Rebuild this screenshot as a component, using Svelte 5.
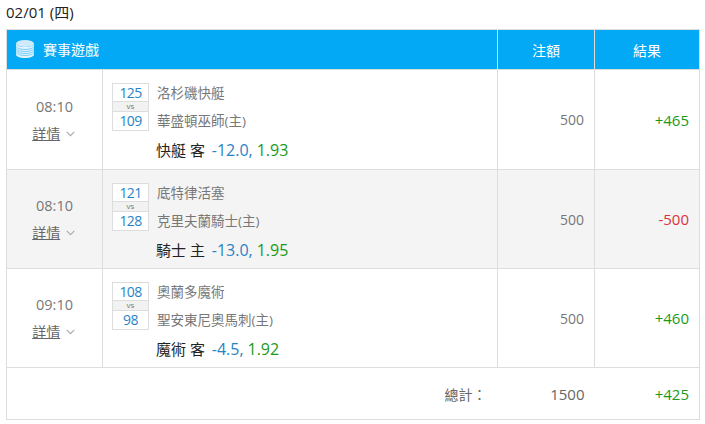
<script>
  const games = [
    { time: '08:10', s1: 125, s2: 109, away: '洛杉磯快艇', home: '華盛頓巫師(主)', pick: '快艇 客', line: '-12.0,', odds: '1.93', bet: 500, result: '+465', win: true, h: 100 },
    { time: '08:10', s1: 121, s2: 128, away: '底特律活塞', home: '克里夫蘭騎士(主)', pick: '騎士 主', line: '-13.0,', odds: '1.95', bet: 500, result: '-500', win: false, shade: true, h: 99 },
    { time: '09:10', s1: 108, s2: 98, away: '奧蘭多魔術', home: '聖安東尼奧馬刺(主)', pick: '魔術 客', line: '-4.5,', odds: '1.92', bet: 500, result: '+460', win: true, h: 99 }
  ];
</script>

<div class="page">
  <div class="date">02/01 (四)</div>
  <table>
    <colgroup>
      <col style="width: 96px" />
      <col style="width: 395px" />
      <col style="width: 97px" />
      <col style="width: 105px" />
    </colgroup>
    <thead>
      <tr>
        <th class="title" colspan="2">
          <div class="title-in">
            <svg width="18" height="18" viewBox="0 0 18 18" aria-hidden="true">
              <ellipse cx="9" cy="3.500" rx="9" ry="3.500" fill="#cfeafb" />
              <path d="M0 3.500v11c0 1.900 4 3.500 9 3.500s9-1.600 9-3.500v-11c0 1.900-4 3.500-9 3.500s-9-1.600-9-3.500z" fill="#e4f4fd" />
              <path d="M0 6.500c1.500 2 5 3 9 3s7.500-1 9-3M0 8.500c1.500 2 5 3 9 3s7.500-1 9-3M0 10.500c1.500 2 5 3 9 3s7.500-1 9-3M0 12.500c1.500 2 5 3 9 3s7.500-1 9-3" fill="none" stroke="#5cc4f5" stroke-width="0.800" />
            </svg>
            <span>賽事遊戲</span>
          </div>
        </th>
        <th>注額</th>
        <th>結果</th>
      </tr>
    </thead>
    <tbody>
      {#each games as g}
        <tr class:shade={g.shade} style="height: {g.h}px">
          <td class="when">
            <div class="time">{g.time}</div>
            <div class="more"><span class="link">詳情</span>
              <svg width="9" height="6" viewBox="0 0 9 6" aria-hidden="true"><path d="M0.700 0.800L4.500 4.600L8.300 0.800" fill="none" stroke="#aaa" stroke-width="1.100" /></svg>
            </div>
          </td>
          <td class="game">
            <div class="game-in">
              <div class="score">
                <div class="num">{g.s1}</div>
                <div class="vs">vs</div>
                <div class="num">{g.s2}</div>
              </div>
              <div class="teams">
                <div class="team">{g.away}</div>
                <div class="team">{g.home}</div>
              </div>
            </div>
            <div class="pick">{g.pick} <span class="line">{g.line}</span> <span class="odds">{g.odds}</span></div>
          </td>
          <td class="bet">{g.bet}</td>
          <td class="res" class:win={g.win} class:lose={!g.win}>{g.result}</td>
        </tr>
      {/each}
      <tr class="total">
        <td class="total-label" colspan="2">總計：</td>
        <td class="bet sum">1500</td>
        <td class="res win">+425</td>
      </tr>
    </tbody>
  </table>
</div>

<style>
  :global(body) {
    margin: 0;
    background: #fff;
  }
  .page {
    padding: 0 6px;
    font-family: "Open Sans", "Noto Sans CJK TC", sans-serif;
    font-size: 14px;
    color: #666;
  }
  .date {
    height: 29px;
    line-height: 25px;
    color: #222;
    font-size: 15px;
  }
  table {
    width: 693px;
    border-collapse: collapse;
    table-layout: fixed;
  }
  th, td {
    border: 1px solid #ddd;
    padding: 0;
  }
  th {
    height: 39px;
    background: #03a9f4;
    color: #fff;
    font-weight: 400;
    font-size: 14px;
    text-align: center;
  }
  th.title { text-align: left; }
  .title-in {
    display: flex;
    align-items: center;
    gap: 9px;
    padding-left: 9px;
    margin-top: -2px;
  }
  tr.shade td { background: #f4f4f4; }
  .when { text-align: center; }
  .time { font-size: 14.500px; color: #777; margin-bottom: 7px; }
  .more { font-size: 14px; margin-left: -2px; }
  .link { text-decoration: underline; margin-right: 1px; }
  .more svg { vertical-align: 2px; margin-left: 1px; }
  .game { padding-left: 9px; padding-top: 4px; }
  .game-in { display: flex; gap: 8px; }
  .score {
    width: 35px;
    border: 1px solid #ddd;
    text-align: center;
    background: #fff;
  }
  .num {
    height: 17px;
    line-height: 17px;
    color: #2a83c5;
    font-size: 14px;
    letter-spacing: -0.600px;
  }
  .vs {
    height: 9px;
    line-height: 8px;
    font-size: 8px;
    background: #f2f2f2;
    border-top: 1px solid #ddd;
    border-bottom: 1px solid #ddd;
    color: #777;
  }
  .teams { display: flex; flex-direction: column; gap: 8px; font-size: 13.500px; color: #777; }
  .team { height: 20px; line-height: 20px; }
  .pick {
    margin: 9px 0 0 44px;
    font-size: 15px;
    color: #222;
    line-height: 20px;
  }
  .line, .odds { font-size: 16px; }
  .line { color: #2a83c5; margin-left: 3px; }
  .odds { color: #1a9a1a; }
  .bet { text-align: right; padding-right: 10px; font-size: 14px; color: #777; }
  .sum { font-size: 15px; color: #666; }
  .res { text-align: right; padding-right: 10px; font-size: 15px; }
  .win { color: #1a9a1a; }
  .lose { color: #d9333f; }
  tr.total { height: 52px; }
  .total td { border-left: 0; border-right: 0; }
  .total td:first-child { border-left: 1px solid #ddd; }
  .total td:last-child { border-right: 1px solid #ddd; }
  .total-label { text-align: right; padding-right: 11px; }
</style>
